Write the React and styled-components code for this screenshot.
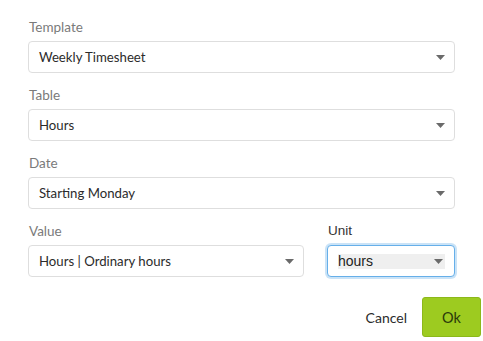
import styled, { createGlobalStyle } from "styled-components";

const GlobalStyle = createGlobalStyle`
  html, body {
    margin: 0;
    padding: 0;
    background: #fff;
  }
  body {
    font-family: "Lato", "Open Sans", sans-serif;
  }
`;

const Form = styled.div`
  width: 427px;
  padding: 17px 0 0 28px;
`;

const Group = styled.div`
  margin-bottom: 12px;
`;

const Label = styled.div`
  height: 20px;
  line-height: 20px;
  margin-bottom: 4px;
  padding-left: 1px;
  font-size: 13.5px;
  color: ${(p) => (p.$dark ? "#333" : "#7a7a7a")};
  font-family: ${(p) => (p.$dark ? '"Liberation Sans", Arial, sans-serif' : '"Lato", sans-serif')};
`;

const Select = styled.div`
  box-sizing: border-box;
  height: 32px;
  display: flex;
  align-items: center;
  justify-content: space-between;
  padding: 0 9px 0 10px;
  border: 1px solid ${(p) => (p.$focus ? "#66afe9" : "#dedede")};
  border-radius: 4px;
  box-shadow: ${(p) => (p.$focus ? "0 0 0 2px rgba(102,175,233,0.35)" : "none")};
  font-size: 13.2px;
  color: #2b2b2b;
  background: #fff;
`;

const NativeValue = styled.div`
  flex: 1;
  display: flex;
  align-items: center;
  justify-content: space-between;
  height: 15px;
  padding: 0 2px 0 0;
  background: #efefef;
  font-family: "Liberation Sans", Arial, sans-serif;
  font-size: 14px;
  color: #222;
`;

const Row = styled.div`
  display: grid;
  grid-template-columns: 276px 128px;
  column-gap: 23px;
`;

const Actions = styled.div`
  display: flex;
  justify-content: flex-end;
  align-items: center;
  gap: 15px;
  margin: 8px -26px 0 0;
`;

const TextButton = styled.button`
  border: none;
  background: none;
  padding: 0;
  font-family: "Lato", sans-serif;
  font-size: 14px;
  color: #2b2b2b;
`;

const OkButton = styled.button`
  width: 59px;
  height: 40px;
  border: 1px solid #8cb81a;
  border-radius: 3px;
  background: #9dcb20;
  font-family: "Lato", sans-serif;
  font-size: 14.5px;
  color: #2a3a0a;
`;

function Caret() {
  return (
    <svg width="9" height="5" viewBox="0 0 9 5">
      <path d="M0 0 H9 L4.5 5 Z" fill="#6a6a6a" />
    </svg>
  );
}

function Field({ label, value }) {
  return (
    <Group>
      <Label>{label}</Label>
      <Select>
        <span>{value}</span>
        <Caret />
      </Select>
    </Group>
  );
}

export default function App() {
  return (
    <>
      <GlobalStyle />
      <Form>
        <Field label="Template" value="Weekly Timesheet" />
        <Field label="Table" value="Hours" />
        <Field label="Date" value="Starting Monday" />
        <Row>
          <Field label="Value" value="Hours | Ordinary hours" />
          <Group>
            <Label $dark>Unit</Label>
            <Select $focus>
              <NativeValue>
                <span>hours</span>
                <Caret />
              </NativeValue>
            </Select>
          </Group>
        </Row>
        <Actions>
          <TextButton>Cancel</TextButton>
          <OkButton>Ok</OkButton>
        </Actions>
      </Form>
    </>
  );
}
